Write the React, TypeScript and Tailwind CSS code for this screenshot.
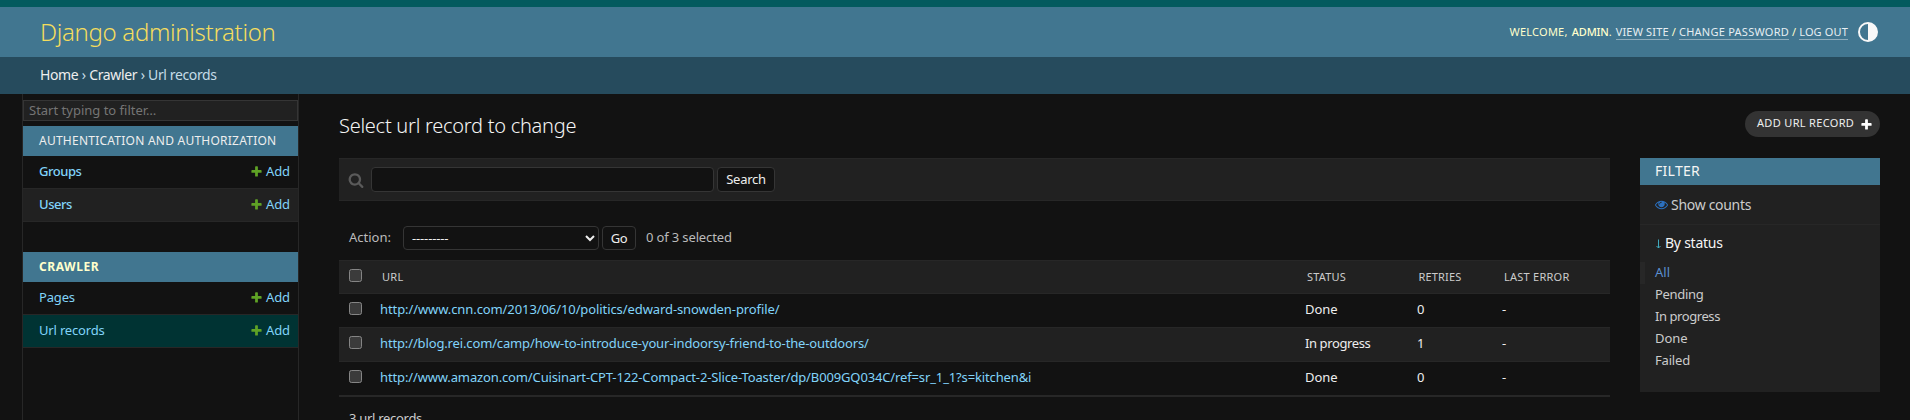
import React from "react";

const PLUS =
  "M1600 796v192q0 40-28 68t-68 28h-416v416q0 40-28 68t-68 28h-192q-40 0-68-28t-28-68v-416h-416q-40 0-68-28t-28-68v-192q0-40 28-68t68-28h416v-416q0-40 28-68t68-28h192q40 0 68 28t28 68v416h416q40 0 68 28t28 68z";
const SEARCH =
  "M1216 832q0-185-131.5-316.5t-316.5-131.5-316.5 131.5-131.5 316.5 131.5 316.5 316.5 131.5 316.5-131.5 131.5-316.5zm512 832q0 52-38 90t-90 38q-54 0-90-38l-343-342q-179 124-399 124-143 0-273.5-55.5t-225-150-150-225-55.5-273.5 55.5-273.5 150-225 225-150 273.5-55.5 273.5 55.5 225 150 150 225 55.5 273.5q0 220-124 399l343 343q37 37 37 90z";
const EYE =
  "M1664 960q-152-236-381-353 61 104 61 225 0 185-131.5 316.5t-316.5 131.5-316.5-131.5-131.5-316.5q0-121 61-225-229 117-381 353 133 205 333.5 326.5t434.5 121.5 434.5-121.5 333.5-326.5zm-720-384q0-20-14-34t-34-14q-125 0-214.5 89.5t-89.5 214.5q0 20 14 34t34 14 34-14 14-34q0-86 61-147t147-61q20 0 34-14t14-34zm848 384q0 34-20 69-140 230-376.5 368.5t-499.5 138.5-499.5-139-376.5-368q-20-35-20-69t20-69q140-229 376.5-368t499.5-139 499.5 139 376.5 368q20 35 20 69z";

function Icon({ d, className }: { d: string; className: string }) {
  return (
    <svg viewBox="0 0 1792 1792" className={`shrink-0 ${className}`} fill="currentColor" aria-hidden="true">
      <path d={d} />
    </svg>
  );
}

function Header() {
  return (
    <header className="flex h-[50px] items-center justify-between bg-[#417690] pl-10 pr-8">
      <h1 className="text-2xl font-light leading-8 tracking-[-0.32px] text-[#f5dd5d]">Django administration</h1>
      <div className="flex items-center pb-px text-[11px] leading-4 text-[#ffffcc]">
        <div className="flex items-center">
          <span className="tracking-[0.25px]">WELCOME,</span>
          <span className="ml-1 font-medium tracking-[-0.15px]">ADMIN</span>
          <span className="mr-1">.</span>
          <a className="border-b border-white/40 leading-[15px] tracking-[0.18px] text-[#e6eef2]">VIEW SITE</a>
          <span className="mx-[3px]">/</span>
          <a className="border-b border-white/40 leading-[15px] tracking-[0.26px] text-[#e6eef2]">CHANGE PASSWORD</a>
          <span className="mx-[3px]">/</span>
          <a className="border-b border-white/40 leading-[15px] tracking-[0.15px] text-[#e6eef2]">LOG OUT</a>
        </div>
        <svg viewBox="0 0 20 20" className="ml-2.5 size-5" aria-hidden="true">
          <circle cx="10" cy="10" r="9" fill="none" stroke="#f8f8f8" strokeWidth="2" />
          <path d="M10 1a9 9 0 0 1 0 18z" fill="#f8f8f8" />
        </svg>
      </div>
    </header>
  );
}

type Model = { name: string; spacing: string; active?: boolean; striped?: boolean };

function AppGroup({ caption, captionClass, models }: { caption: string; captionClass: string; models: Model[] }) {
  return (
    <section className="mb-[30px]">
      <h2 className={`flex h-[30px] items-center bg-[#417690] px-4 text-xs ${captionClass}`}>{caption}</h2>
      {models.map((m) => (
        <div
          key={m.name}
          className={`flex h-[33px] items-center justify-between border-b border-[#272727] pb-px pl-4 pr-2 text-[13px] text-[#81d4fa] ${
            m.active ? "bg-[#003333]" : m.striped ? "bg-[#212121]" : ""
          }`}
        >
          <a className={m.spacing}>{m.name}</a>
          <a className="flex items-center gap-[3px]">
            <Icon d={PLUS} className="size-[13px] text-[#5fa225]" />
            <span className="tracking-[-0.1px]">Add</span>
          </a>
        </div>
      ))}
    </section>
  );
}

function Sidebar() {
  return (
    <nav className="ml-[22px] h-full w-[277px] shrink-0 border-x border-[#272727] pt-1.5">
      <div className="mb-[5px] flex h-[21px] items-center border border-[#353535] bg-[#212121] px-[5px] text-[13px] text-[#757575]">
        Start typing to filter…
      </div>
      <AppGroup
        caption="AUTHENTICATION AND AUTHORIZATION"
        captionClass="tracking-[0.24px] text-[#eeeeee]"
        models={[
          { name: "Groups", spacing: "font-medium tracking-[-0.45px]" },
          { name: "Users", spacing: "font-medium tracking-[-0.45px]", striped: true },
        ]}
      />
      <AppGroup
        caption="CRAWLER"
        captionClass="font-bold tracking-[0.55px] text-[#ffffcc] pb-px"
        models={[
          { name: "Pages", spacing: "tracking-[-0.16px]" },
          { name: "Url records", spacing: "tracking-[-0.18px]", active: true },
        ]}
      />
    </nav>
  );
}

const ROWS = [
  { url: "http://www.cnn.com/2013/06/10/politics/edward-snowden-profile/", spacing: "tracking-[-0.09px]", status: "Done", retries: 0 },
  { url: "http://blog.rei.com/camp/how-to-introduce-your-indoorsy-friend-to-the-outdoors/", spacing: "tracking-[-0.14px]", status: "In progress", retries: 1 },
  { url: "http://www.amazon.com/Cuisinart-CPT-122-Compact-2-Slice-Toaster/dp/B009GQ034C/ref=sr_1_1?s=kitchen&i", spacing: "tracking-[-0.135px]", status: "Done", retries: 0 },
];

const COLUMNS = "grid grid-cols-[41px_925px_112px_85px_1fr]";

function ResultTable() {
  return (
    <div className="border-b border-[#272727] text-[13px] text-[#eeeeee]">
      <div className={`${COLUMNS} h-[34px] border-y border-[#272727] bg-[#212121] text-[11px] leading-[31px] text-[#cccccc]`}>
        <input type="checkbox" className="ml-2.5 mt-2 size-[13px]" />
        <span className="pl-0.5 tracking-[0.28px]">URL</span>
        <span className="pl-[2px] tracking-[0.19px]">STATUS</span>
        <span className="pl-[1.5px] tracking-[0.17px]">RETRIES</span>
        <span className="pl-[2px] tracking-[0.25px]">LAST ERROR</span>
      </div>
      {ROWS.map((r) => (
        <div key={r.url} className={`${COLUMNS} h-[34px] border-b border-[#272727] leading-[30px] even:bg-[#121212] odd:bg-[#212121]`}>
          <input type="checkbox" className="ml-2.5 mt-2 size-[13px]" />
          <a className={`text-[#81d4fa] ${r.spacing}`}>{r.url}</a>
          <span className={r.status === "In progress" ? "tracking-[-0.4px]" : "tracking-[-0.06px]"}>{r.status}</span>
          <span>{r.retries}</span>
          <span>-</span>
        </div>
      ))}
    </div>
  );
}

function ChangeList() {
  return (
    <div className="w-[1271px]">
      <div className="flex h-[43px] items-center border-y border-[#272727] bg-[#212121] pl-[9px]">
        <Icon d={SEARCH} className="size-4 text-[#5a5a5a]" />
        <input type="text" className="ml-[7px] h-[25px] w-[343px] rounded border border-[#353535] bg-[#121212]" />
        <button className="ml-[3px] h-[25px] w-[58px] rounded border border-[#353535] bg-[#121212] pb-0.5 text-[13px] leading-5 tracking-[-0.27px] text-[#eeeeee]">
          Search
        </button>
      </div>
      <div className="mb-2.5 mt-[25px] flex h-6 items-center pl-2.5 text-[13px] text-[#bbbbbb]">
        <span className="w-[54px]">Action:</span>
        <select className="h-6 w-[196px] rounded border border-[#353535] bg-[#121212] pl-1 text-[13px] tracking-[-0.15px] text-[#eeeeee]">
          <option>---------</option>
        </select>
        <button className="ml-[3px] h-6 w-[34px] rounded border border-[#353535] bg-[#121212] text-[13px] leading-[22px] tracking-[-0.5px] text-[#eeeeee]">
          Go
        </button>
        <span className="ml-2.5 tracking-[-0.14px]">0 of 3 selected</span>
      </div>
      <ResultTable />
      <p className="mt-[11px] pl-2.5 text-[13px] leading-5 tracking-[-0.29px] text-[#cccccc]">3 url records</p>
    </div>
  );
}

const STATUSES = [
  { name: "All", spacing: "" },
  { name: "Pending", spacing: "tracking-[-0.3px]" },
  { name: "In progress", spacing: "tracking-[-0.43px]" },
  { name: "Done", spacing: "tracking-[-0.06px]" },
  { name: "Failed", spacing: "tracking-[-0.18px]" },
];

function FilterPanel() {
  return (
    <aside className="h-[234px] w-60 bg-[#212121] text-[#cccccc]">
      <h2 className="h-[27px] bg-[#417690] pl-[15px] text-sm leading-[26px] tracking-[0.28px] text-[#f5f5f5]">FILTER</h2>
      <div className="flex h-10 items-center border-b border-[#272727] pl-[15px] text-sm">
        <Icon d={EYE} className="mr-[3px] size-[13px] text-[#2b70bf]" />
        <span className="tracking-[-0.3px]">Show counts</span>
      </div>
      <h3 className="flex h-[37px] items-center pb-0.5 pl-[15px] text-sm text-[#f5f5f5]">
        <svg viewBox="0 0 7 10" className="mr-[3px] mt-[3px] h-[10px] w-[7px]" fill="none" stroke="#3fa9bd" aria-hidden="true">
          <path d="M3.5 .5v8.5M1.5 7l2 2 2-2" />
        </svg>
        <span className="tracking-[-0.25px]">By status</span>
      </h3>
      <ul className="text-[13px] leading-5">
        {STATUSES.map((s, i) => (
          <li
            key={s.name}
            className={`h-[22px] ${s.spacing} ${i === 0 ? "border-l-[5px] border-[#272727] pl-2.5 text-[#5b8fd0]" : "pl-[15px]"}`}
          >
            <a>{s.name}</a>
          </li>
        ))}
      </ul>
    </aside>
  );
}

export default function App() {
  return (
    <div className="flex h-[420px] w-full flex-col overflow-hidden bg-[#121212] font-['Noto_Sans',sans-serif] scheme-dark">
      <div className="h-[7px] shrink-0 bg-[#035a5e]" />
      <Header />
      <div className="flex h-[37px] shrink-0 items-center gap-[3.5px] bg-[#264b5d] pb-px pl-10 text-sm tracking-[-0.38px] text-[#c4dce8]">
        <a className="text-[#eeeeee]">Home</a>
        <span>›</span>
        <a className="text-[#eeeeee]">Crawler</a>
        <span>›</span>
        <span>Url records</span>
      </div>
      <div className="flex min-h-0 flex-1">
        <Sidebar />
        <main className="flex-1 pl-10 pr-[30px]">
          <div className="flex h-16 items-start justify-between">
            <h1 className="pt-4 text-xl font-light leading-8 tracking-[-0.26px] text-[#f5f5f5]">Select url record to change</h1>
            <a className="mt-[17px] flex h-[26px] w-[135px] items-center rounded-full bg-[#333333] pl-3 text-[11px] text-[#eeeeee]">
              <span className="pb-0.5 tracking-[0.33px]">ADD URL RECORD</span>
              <Icon d={PLUS} className="ml-[6px] size-[13px] text-white" />
            </a>
          </div>
          <div className="flex items-start justify-between">
            <ChangeList />
            <FilterPanel />
          </div>
        </main>
      </div>
    </div>
  );
}
